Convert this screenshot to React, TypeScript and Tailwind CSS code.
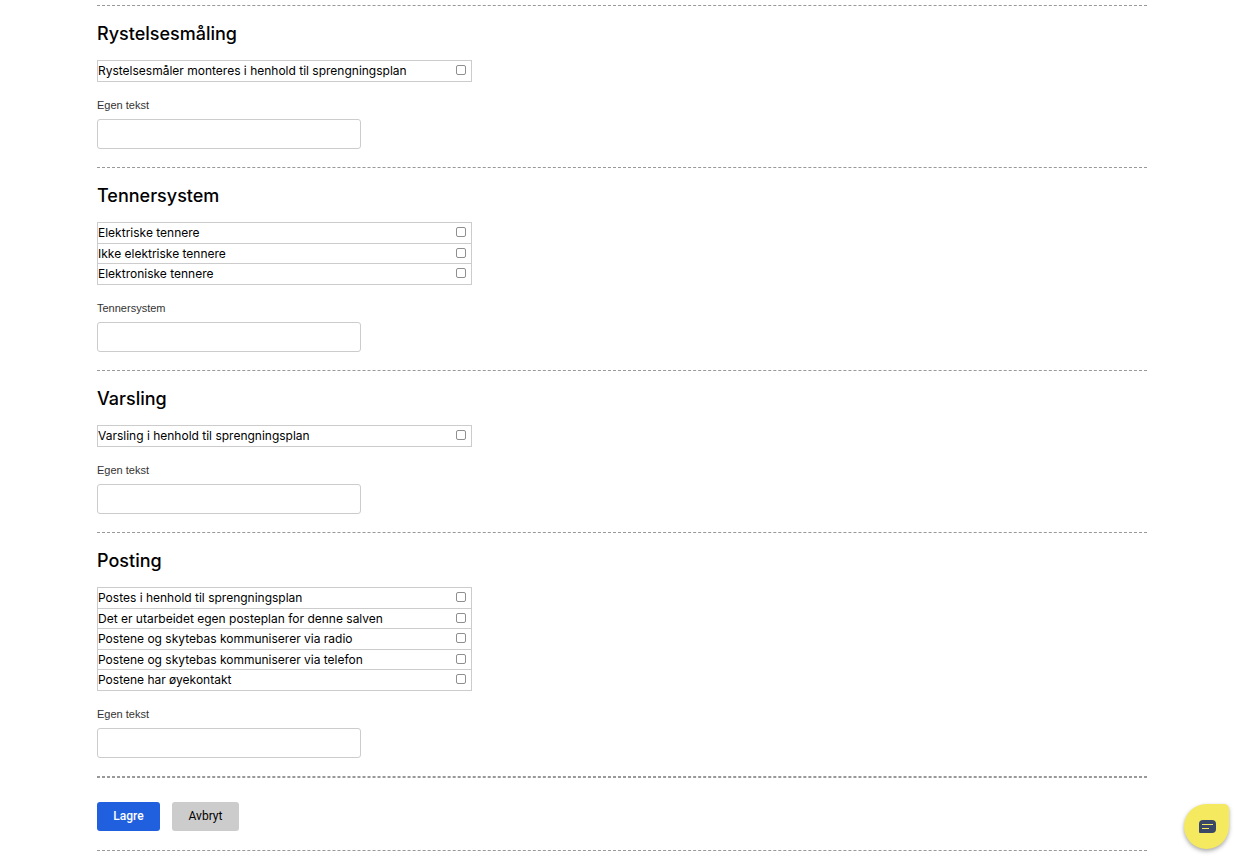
import { useState } from "react";

interface SectionData {
  id: string;
  title: string;
  options: string[];
  textLabel: string;
}

const sections: SectionData[] = [
  {
    id: "rystelser",
    title: "Rystelsesmåling",
    options: ["Rystelsesmåler monteres i henhold til sprengningsplan"],
    textLabel: "Egen tekst",
  },
  {
    id: "tennersystem",
    title: "Tennersystem",
    options: ["Elektriske tennere", "Ikke elektriske tennere", "Elektroniske tennere"],
    textLabel: "Tennersystem",
  },
  {
    id: "varsling",
    title: "Varsling",
    options: ["Varsling i henhold til sprengningsplan"],
    textLabel: "Egen tekst",
  },
  {
    id: "posting",
    title: "Posting",
    options: [
      "Postes i henhold til sprengningsplan",
      "Det er utarbeidet egen posteplan for denne salven",
      "Postene og skytebas kommuniserer via radio",
      "Postene og skytebas kommuniserer via telefon",
      "Postene har øyekontakt",
    ],
    textLabel: "Egen tekst",
  },
];

function Section({ section }: { section: SectionData }) {
  const [checked, setChecked] = useState<string[]>([]);
  const [text, setText] = useState("");

  const toggle = (option: string) => {
    setChecked((prev) =>
      prev.includes(option) ? prev.filter((o) => o !== option) : [...prev, option],
    );
  };

  return (
    <section className="border-t border-dashed border-[#999] pt-4 pb-[18px] last-of-type:border-b">
      <h2 className="text-lg leading-6 font-medium">{section.title}</h2>
      <table className="mt-[14px] w-full max-w-[375px] border-collapse border border-[#ccc] text-xs leading-4">
        <tbody>
          {section.options.map((option, i) => (
            <tr key={option} className="h-[21px] border border-[#ccc] even:h-5">
              <td className="p-0">
                <label htmlFor={section.id + i}>{option}</label>
              </td>
              <td className="w-5 p-0">
                <input
                  type="checkbox"
                  id={section.id + i}
                  checked={checked.includes(option)}
                  onChange={() => toggle(option)}
                  className="mx-1 mb-[2px] block size-[10px] appearance-none rounded-xs border border-[#8f8f8f] bg-white checked:bg-[#2060df]"
                />
              </td>
            </tr>
          ))}
        </tbody>
      </table>
      <label
        htmlFor={section.id + "-text"}
        className="mt-[15px] block font-['Liberation_Sans',sans-serif] text-[11px] leading-4 text-[#333]"
      >
        {section.textLabel}
      </label>
      <input
        type="text"
        id={section.id + "-text"}
        value={text}
        onChange={(e) => setText(e.target.value)}
        className="mt-[6px] block h-[30px] w-full max-w-[264px] rounded-[3px] border border-[#ccc] bg-white px-2 text-xs"
      />
    </section>
  );
}

function App() {
  return (
    <div className="bg-white px-4 font-['Inter','Liberation_Sans',sans-serif] text-black">
      <form className="mx-auto max-w-[1050px] pt-[5px]" onSubmit={(e) => e.preventDefault()}>
        {sections.map((section) => (
          <Section key={section.id} section={section} />
        ))}
        <div className="flex gap-3 border-t border-dashed border-[#999] pt-6 pb-[19px] font-['Roboto','Liberation_Sans',sans-serif] text-xs">
          <button
            type="submit"
            className="h-[29px] w-[63px] rounded-[3px] bg-[#2060df] pb-px font-medium text-white"
          >
            Lagre
          </button>
          <button type="button" className="h-[29px] w-[67px] rounded-[3px] bg-[#ccc] pb-px">
            Avbryt
          </button>
        </div>
        <div className="border-t border-dashed border-[#999]" />
      </form>

      <button
        type="button"
        aria-label="Chat"
        className="fixed right-[15px] bottom-2 flex size-[45px] items-center justify-center rounded-[50%] rounded-tr-[5px] bg-[#f5e960] pl-px shadow-[0_2px_4px_rgba(0,0,0,0.35)]"
      >
        <svg width="17" height="13" viewBox="0 0 17 13" aria-hidden="true">
          <path
            d="M4 0h9q4 0 4 4v5q0 4-4 4H1q-1 0-1-1V4q0-4 4-4z"
            fill="#3a4766"
          />
          <path d="M3 4.5h11M3 8.5h7" stroke="#f5e960" strokeWidth="1" />
        </svg>
      </button>
    </div>
  );
}

export default App;
